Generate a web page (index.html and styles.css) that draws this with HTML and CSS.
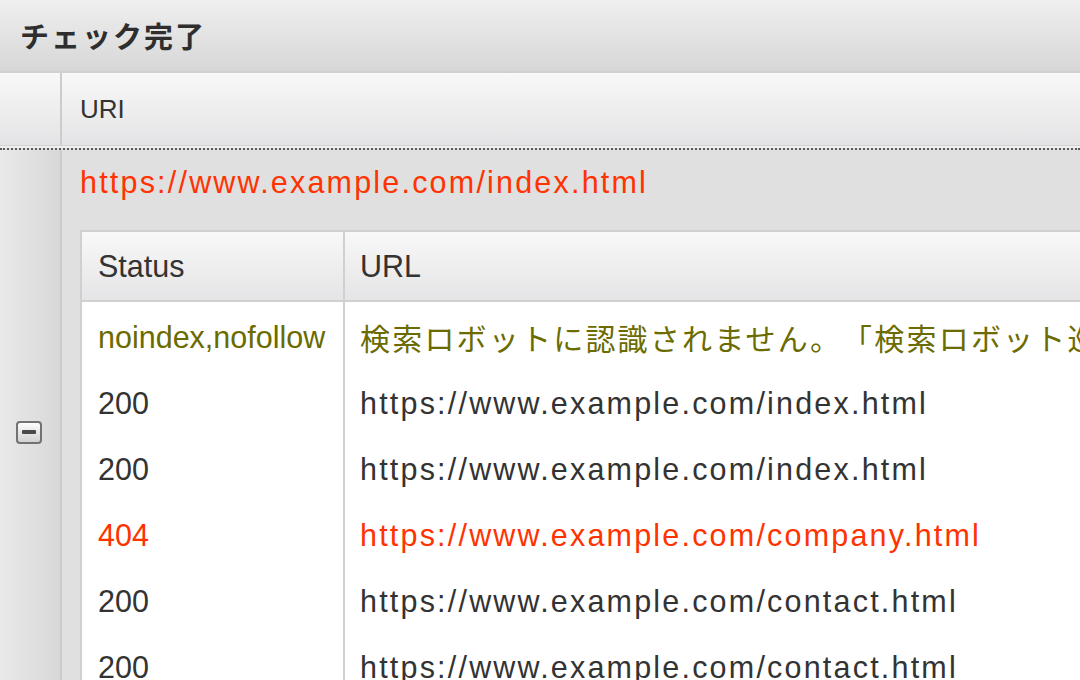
FILE: index.html
```html
<!DOCTYPE html>
<html lang="ja">
<head>
<meta charset="utf-8">
<title>チェック完了</title>
<link rel="stylesheet" href="styles.css">
</head>
<body>
<div class="page">
  <div class="titlebar"><h1 class="title">チェック完了</h1></div>
  <div class="head-row">
    <div class="side side-head"></div>
    <div class="head-cell">URI</div>
  </div>
  <div class="body-row">
    <div class="side side-body"><span class="toggle" aria-label="collapse"></span></div>
    <div class="content">
      <div class="url-title url">https://www.example.com/index.html</div>
      <table class="result">
        <thead>
          <tr><th class="col-status">Status</th><th class="col-url">URL</th></tr>
        </thead>
        <tbody>
          <tr class="warn"><td class="col-status">noindex,nofollow</td><td class="col-url jp">検索ロボットに認識されません。「検索ロボット巡回を許可する」設定にしてください。</td></tr>
          <tr><td class="col-status">200</td><td class="col-url url">https://www.example.com/index.html</td></tr>
          <tr><td class="col-status">200</td><td class="col-url url">https://www.example.com/index.html</td></tr>
          <tr class="error"><td class="col-status">404</td><td class="col-url url">https://www.example.com/company.html</td></tr>
          <tr><td class="col-status">200</td><td class="col-url url">https://www.example.com/contact.html</td></tr>
          <tr><td class="col-status">200</td><td class="col-url url">https://www.example.com/contact.html</td></tr>
        </tbody>
      </table>
    </div>
  </div>
</div>
</body>
</html>
```

FILE: styles.css
```css
html, body {
  margin: 0;
  padding: 0;
}
body {
  background: #e0e0e0;
  overflow: hidden;
  width: 1080px;
  height: 680px;
  font-family: "Liberation Sans", Arial, "Noto Sans CJK JP", sans-serif;
  color: #333;
}
.page {
  width: 1080px;
}
.titlebar {
  height: 71px;
  border-bottom: 2px solid #d0d0d0;
  background: linear-gradient(#efefef, #d7d7d7);
  display: flex;
  align-items: center;
  padding-left: 20px;
}
.title {
  margin: 0;
  font-family: "Noto Sans CJK JP", sans-serif;
  font-weight: 700;
  font-size: 29px;
  letter-spacing: 2px;
  color: #2e2e2e;
  line-height: 1;
}
.head-row {
  display: flex;
  height: 72px;
  border-bottom: 1px solid #d2d2d2;
  box-shadow: 0 2px 0 #efefef;
  background: linear-gradient(#f8f8f8, #e4e4e6);
}
.side {
  width: 60px;
  flex: none;
  border-right: 2px solid #cccccc;
}
.head-cell {
  display: flex;
  align-items: center;
  padding-left: 18px;
  font-size: 26px;
  color: #333;
}
.body-row {
  display: flex;
  margin-top: 2px;
  border-top: 2px dotted #5a5a5a;
}
.side-body {
  background: linear-gradient(90deg, #e9e9e9, #d8d8d8);
  display: flex;
  align-items: center;
  justify-content: center;
  padding-right: 10px;
  width: 50px;
}
.toggle {
  position: relative;
  display: block;
  width: 22px;
  height: 19px;
  border: 2px solid #727272;
  border-radius: 4px;
  background: linear-gradient(#fdfdfd, #d2d2d2);
  margin-left: 8px;
  margin-top: 0;
}
.toggle::after {
  content: "";
  position: absolute;
  left: 4px;
  right: 4px;
  top: 7px;
  height: 4px;
  background: #4a4a4a;
  border-radius: 1px;
}
.content {
  padding: 14px 0 14px 18px;
  flex: none;
}
.url {
  letter-spacing: 2.2px;
}
.url-title {
  font-size: 30.5px;
  line-height: 36px;
  color: #ff3300;
  margin-bottom: 30px;
  white-space: nowrap;
}
.result {
  border-collapse: separate;
  border-spacing: 0;
  border: 2px solid #d0d0d0;
  background: #fff;
  font-size: 30.5px;
  white-space: nowrap;
}
.result th {
  height: 70px;
  font-weight: 400;
  text-align: left;
  color: #333;
  background: linear-gradient(#f8f8f8, #e5e5e7);
  border-bottom: 2px solid #d0d0d0;
  padding: 0;
  box-sizing: border-box;
}
.result td {
  height: 66px;
  padding: 4px 0 0 0;
  box-sizing: border-box;
  vertical-align: middle;
}
.col-status {
  width: 263px;
  box-sizing: border-box;
  padding-left: 16px !important;
  border-right: 2px solid #d0d0d0;
}
.col-url {
  padding-left: 15px !important;
  padding-right: 30px !important;
}
.jp {
  font-family: "Noto Sans CJK JP", sans-serif;
  font-size: 30px;
  letter-spacing: 2.2px;
  text-spacing-trim: space-all;
}
.warn td {
  color: #6b6b00;
}
.error td {
  color: #ff3300;
}
```
